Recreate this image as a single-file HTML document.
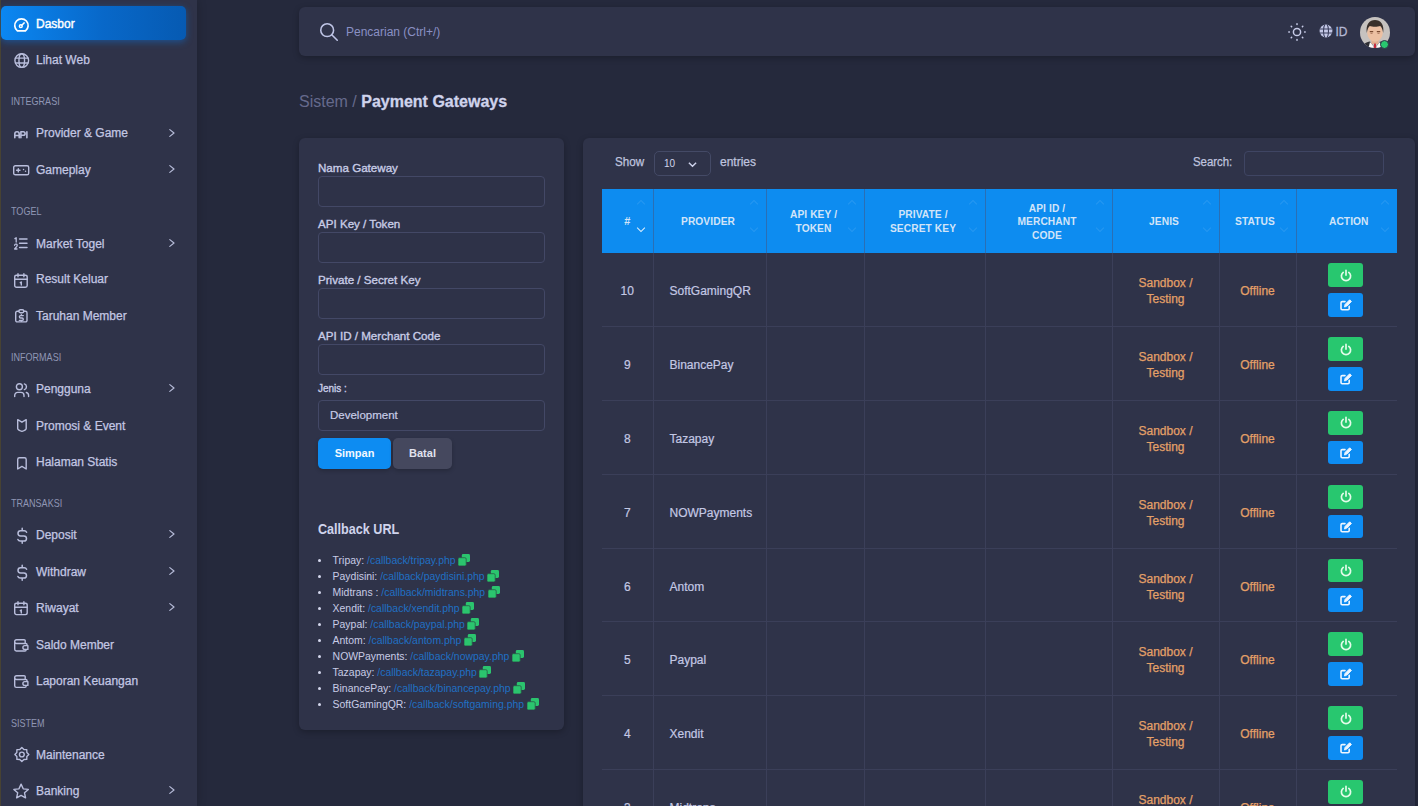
<!DOCTYPE html>
<html><head><meta charset="utf-8">
<style>
*{box-sizing:border-box;margin:0;padding:0}
html,body{width:1418px;height:806px;overflow:hidden}
body{background:#25293c;font-family:"Liberation Sans",sans-serif;color:#b6bee3;position:relative}
.edge{position:absolute;left:0;top:0;width:1px;height:806px;background:#4a4536}
#sb{position:absolute;left:1px;top:0;width:196px;height:806px;background:#2f3349;box-shadow:2px 0 8px rgba(0,0,0,.14);z-index:2}
.it{position:absolute;left:0;height:34px;width:185px}
.it.act{background:linear-gradient(90deg,#0b87f2 0%,#0868c9 55%,#065ab2 100%);border-radius:5px;box-shadow:0 2px 7px rgba(10,120,230,.45)}
.tx{position:absolute;left:35px;height:34px;line-height:34px;font-size:12px;color:#c3c7e3;white-space:nowrap;-webkit-text-stroke:.25px #c3c7e3}
.tx.act{color:#fff;-webkit-text-stroke:.4px #fff}
.ic.act{stroke:#fff}
.ic{position:absolute;overflow:visible;fill:none;stroke:#b9bedc;stroke-width:1.4;stroke-linecap:round;stroke-linejoin:round}
.chev{position:absolute;left:168px;width:6px;height:8px;overflow:visible;fill:none;stroke:#b6bbd8;stroke-width:1.2;stroke-linecap:round;stroke-linejoin:round}
.hd{position:absolute;left:9.8px;font-size:10.5px;line-height:12px;color:#9096b4;letter-spacing:0;transform:scaleX(.86);transform-origin:0 0}
#top{position:absolute;left:299px;top:6.5px;width:1116px;height:49px;background:#2f3349;border-radius:6px;box-shadow:0 2px 6px rgba(0,0,0,.25)}
.card{position:absolute;background:#2f3349;border-radius:6px;box-shadow:0 2px 6px rgba(0,0,0,.25)}
.lbl{position:absolute;left:19px;font-size:11.6px;color:#c8cce6;-webkit-text-stroke:.35px #c8cce6}
.cb{list-style:none;font-size:10.45px;color:#c8cce6}
.cb li{position:relative;height:16px;line-height:16px;padding-left:14.6px;white-space:nowrap}
.cb li:before{content:"";position:absolute;left:-0.3px;top:6.8px;width:3.2px;height:3.2px;border-radius:50%;background:#d5d8ee}
.cb a{color:#2070c4}
.cp{display:inline-block;width:12px;height:12px;margin-left:2.5px;vertical-align:-2px}

#tbl{position:absolute;left:19px;top:51px;border-collapse:collapse;table-layout:fixed;width:795px}
#tbl th{height:64px;background:#0d8cf0;color:#d2e4f8;font-size:10.2px;font-weight:bold;letter-spacing:.1px;line-height:13.6px;text-align:center;position:relative;padding:2px 9px 0 6px;border-left:1px solid #2a6fb5}
#tbl th:first-child{border-left:none}
#tbl th:before{content:"";position:absolute;right:9px;top:12px;width:5px;height:5px;border-left:1.3px solid rgba(255,255,255,.1);border-top:1.3px solid rgba(255,255,255,.1);transform:rotate(45deg)}
#tbl th:after{content:"";position:absolute;right:9px;top:36px;width:5px;height:5px;border-right:1.3px solid rgba(255,255,255,.1);border-bottom:1.3px solid rgba(255,255,255,.1);transform:rotate(45deg)}
#tbl th.srt{padding:2px 0 0 0;font-size:11px}
#tbl th.srt:after{border-color:rgba(255,255,255,.85);border-width:1.6px}
#tbl td{height:73.8px;border-left:1px solid #3b3f59;border-bottom:1px solid #3b3f59;font-size:12px;color:#c4c8e4;text-align:center;padding:3px 0 0 0;-webkit-text-stroke:.2px #c4c8e4}
#tbl td:first-child{border-left:none}
#tbl td.p{text-align:left;padding-left:16px}
#tbl td.a{padding-top:0.5px}
#tbl td.o{color:#e4a068;line-height:16px;-webkit-text-stroke:.25px #e4a068}
.bt{display:block;margin:0 auto;width:35px;height:23.7px;border-radius:3px;position:relative;left:-0.8px}
.bt svg{position:absolute;left:11px;top:5px;width:14px;height:14px;fill:none;stroke:#fff;stroke-width:2.6;stroke-linecap:round;stroke-linejoin:round}
.inp{position:absolute;left:19px;width:227px;height:31px;border:1px solid #434866;border-radius:4px;background:#2e3248}
</style></head><body>
<div class="edge"></div>
<div id="sb">
<div class="it act" style="top:6px"></div>
<div class="tx act" style="top:6.7px">Dasbor</div>
<svg class="ic act" style="left:13.1px;top:17.6px;width:14.9px;height:13.7px" viewBox="0 0 14.9 13.7"><path d="M3.4,12.85 A6.7,6.7 0 1 1 11.5,12.85 Z" stroke-width="1.7"/><circle cx="6.8" cy="8.2" r="1.4" stroke-width="1.5"/><path d="M7.8,7.2 L10.2,4.9" stroke-width="1.5"/></svg>
<div class="tx" style="top:42.9px">Lihat Web</div>
<svg class="ic" style="left:12.7px;top:52.7px;width:15.5px;height:15.1px" viewBox="0 0 15.5 15.1"><circle cx="7.75" cy="7.549999999999997" r="6.849999999999997"/><path d="M1.500000000000003,5.149999999999997 H13.999999999999998 M1.500000000000003,9.949999999999998 H13.999999999999998"/><ellipse cx="7.75" cy="7.549999999999997" rx="2.8" ry="6.849999999999997"/></svg>
<div class="hd" style="top:95.0px">INTEGRASI</div>
<div class="tx" style="top:116.3px">Provider &amp; Game</div>
<svg class="ic" style="left:13.3px;top:131.2px;width:13.8px;height:6.7px" viewBox="0 0 13.8 6.7"><path d="M0.8,6.8 V3 a2.2,2.2 0 0 1 4.4,0 V6.8 M0.8,4.5 H5.2 M6.9,6.8 V0.7 H9.3 a1.8,1.8 0 0 1 0,3.6 H6.9 M12.9,0.7 V6.8" stroke-width="1.6"/></svg>
<svg class="chev" style="top:128.5px" viewBox="0 0 6 8"><path d="M0.8,0.6 L5,4 L0.8,7.4"/></svg>
<div class="tx" style="top:152.6px">Gameplay</div>
<svg class="ic" style="left:12.2px;top:165.0px;width:16.4px;height:10.5px" viewBox="0 0 16.4 10.5"><rect x="0.7" y="0.7" width="15.000000000000002" height="9.1" rx="1.6"/><path d="M3.6,5.25 H7 M5.3,3.6 V6.9 M10.5,4.5 h.1 M12.5,6.3 h.1"/></svg>
<svg class="chev" style="top:164.8px" viewBox="0 0 6 8"><path d="M0.8,0.6 L5,4 L0.8,7.4"/></svg>
<div class="hd" style="top:205.1px">TOGEL</div>
<div class="tx" style="top:226.5px">Market Togel</div>
<svg class="ic" style="left:13.2px;top:237.4px;width:13.7px;height:12.5px" viewBox="0 0 13.7 12.5"><path d="M5.6,2 H13 M5.6,6.2 H13 M5.6,10.4 H13" stroke-width="1.5"/><path d="M0.9,1.6 L2.2,0.8 V5 M0.6,8.3 a1.3,1.3 0 1 1 2.2,1 L0.6,12 H3" stroke-width="1.3"/></svg>
<svg class="chev" style="top:238.7px" viewBox="0 0 6 8"><path d="M0.8,0.6 L5,4 L0.8,7.4"/></svg>
<div class="tx" style="top:262.2px">Result Keluar</div>
<svg class="ic" style="left:13.2px;top:272.8px;width:13.9px;height:14.9px" viewBox="0 0 13.9 14.9"><rect x="0.7" y="2.3" width="12.500000000000002" height="11.899999999999977" rx="1.8"/><path d="M4,0.7 V3.8 M9.900000000000002,0.7 V3.8 M0.7,6.2 H13.200000000000003 M6.3,9.7 L7.3,9 V12"/></svg>
<div class="tx" style="top:299.2px">Taruhan Member</div>
<svg class="ic" style="left:13.8px;top:309.4px;width:12.7px;height:13.6px" viewBox="0 0 12.7 13.6"><path d="M3.6,2.2 H2.2 a1.5,1.5 0 0 0 -1.5,1.5 V11.400000000000023 a1.5,1.5 0 0 0 1.5,1.5 H10.5 a1.5,1.5 0 0 0 1.5,-1.5 V3.7 a1.5,1.5 0 0 0 -1.5,-1.5 H9.1"/><rect x="3.9" y="0.7" width="4.9" height="3" rx="1.4"/><path d="M8.3,6.6 H5.6 a1.2,1.2 0 0 0 0,2.4 H7.1 a1.2,1.2 0 0 1 0,2.4 H4.4 M6.35,5.6 V6.6 M6.35,11.4 V12.3"/></svg>
<div class="hd" style="top:350.8px">INFORMASI</div>
<div class="tx" style="top:372.2px">Pengguna</div>
<svg class="ic" style="left:12.9px;top:383.0px;width:15.3px;height:14.3px" viewBox="0 0 15.3 14.3"><circle cx="5.4" cy="3.7" r="3"/><path d="M0.7,13.6 V12.4 a3,3 0 0 1 3,-3 H7 a3,3 0 0 1 3,3 V13.6 M10.4,0.9 a3,3 0 0 1 0,5.7 M14.6,13.6 V12.4 a3,3 0 0 0 -2.3,-2.9"/></svg>
<svg class="chev" style="top:384.4px" viewBox="0 0 6 8"><path d="M0.8,0.6 L5,4 L0.8,7.4"/></svg>
<div class="tx" style="top:408.9px">Promosi &amp; Event</div>
<svg class="ic" style="left:15.5px;top:419.0px;width:9.9px;height:13.0px" viewBox="0 0 9.9 13.0"><path d="M0.7,0.7 L4.95,3.2 L9.2,0.7 V9.4 Q9.2,11 4.95,12.3 Q0.7,11 0.7,9.4 Z"/></svg>
<div class="tx" style="top:445.2px">Halaman Statis</div>
<svg class="ic" style="left:15.5px;top:456.7px;width:9.9px;height:12.7px" viewBox="0 0 9.9 12.7"><path d="M2.4,0.7 H7.499999999999998 a1.7,1.7 0 0 1 1.7,1.7 V11.99999999999999 L4.95,9.399999999999988 L0.7,11.99999999999999 V2.4 a1.7,1.7 0 0 1 1.7,-1.7 Z"/></svg>
<div class="hd" style="top:496.7px">TRANSAKSI</div>
<div class="tx" style="top:518.2px">Deposit</div>
<svg class="ic" style="left:15.5px;top:528.3px;width:10.4px;height:15.1px" viewBox="0 0 10.4 15.1"><path d="M9.6,4.2 A2.6,2.6 0 0 0 7.3,2.7 H3.6 a2.6,2.6 0 0 0 0,5.2 H6.9 a2.6,2.6 0 0 1 0,5.2 H3.2 A2.6,2.6 0 0 1 0.9,11.5 M5.2,0.2 V2.7 M5.2,13.1 V15.3" stroke-width="1.5"/></svg>
<svg class="chev" style="top:530.4px" viewBox="0 0 6 8"><path d="M0.8,0.6 L5,4 L0.8,7.4"/></svg>
<div class="tx" style="top:554.7px">Withdraw</div>
<svg class="ic" style="left:15.5px;top:565.0px;width:10.4px;height:15.4px" viewBox="0 0 10.4 15.4"><path d="M9.6,4.2 A2.6,2.6 0 0 0 7.3,2.7 H3.6 a2.6,2.6 0 0 0 0,5.2 H6.9 a2.6,2.6 0 0 1 0,5.2 H3.2 A2.6,2.6 0 0 1 0.9,11.5 M5.2,0.2 V2.7 M5.2,13.1 V15.3" stroke-width="1.5"/></svg>
<svg class="chev" style="top:566.9px" viewBox="0 0 6 8"><path d="M0.8,0.6 L5,4 L0.8,7.4"/></svg>
<div class="tx" style="top:591.1px">Riwayat</div>
<svg class="ic" style="left:13.2px;top:601.2px;width:13.9px;height:14.3px" viewBox="0 0 13.9 14.3"><rect x="0.7" y="2.3" width="12.500000000000002" height="11.299999999999955" rx="1.8"/><path d="M4,0.7 V3.8 M9.900000000000002,0.7 V3.8 M0.7,6.2 H13.200000000000003 M6.3,9.7 L7.3,9 V12"/></svg>
<svg class="chev" style="top:603.3px" viewBox="0 0 6 8"><path d="M0.8,0.6 L5,4 L0.8,7.4"/></svg>
<div class="tx" style="top:627.9px">Saldo Member</div>
<svg class="ic" style="left:13.3px;top:638.5px;width:14.6px;height:12.7px" viewBox="0 0 14.6 12.7"><path d="M11.2,3.4 V1.8 a1.1,1.1 0 0 0 -1.1,-1.1 H2.6 a1.9,1.9 0 0 0 -1.9,1.9 V10.300000000000045 a1.7,1.7 0 0 0 1.7,1.7 H11 a1.1,1.1 0 0 0 1.1,-1.1 V10.6 M0.7,2.6 a1.9,1.9 0 0 0 1.9,1.9 H11.9 a1.1,1.1 0 0 1 1.1,1.1 V6.4"/><path d="M13.899999999999999,6.6 V10.4 H10.8 a1.9,1.9 0 0 1 0,-3.8 Z"/></svg>
<div class="tx" style="top:664.4px">Laporan Keuangan</div>
<svg class="ic" style="left:13.3px;top:675.0px;width:14.6px;height:13.1px" viewBox="0 0 14.6 13.1"><path d="M11.2,3.4 V1.8 a1.1,1.1 0 0 0 -1.1,-1.1 H2.6 a1.9,1.9 0 0 0 -1.9,1.9 V10.700000000000022 a1.7,1.7 0 0 0 1.7,1.7 H11 a1.1,1.1 0 0 0 1.1,-1.1 V10.6 M0.7,2.6 a1.9,1.9 0 0 0 1.9,1.9 H11.9 a1.1,1.1 0 0 1 1.1,1.1 V6.4"/><path d="M13.899999999999999,6.6 V10.4 H10.8 a1.9,1.9 0 0 1 0,-3.8 Z"/></svg>
<div class="hd" style="top:716.8px">SISTEM</div>
<div class="tx" style="top:737.9px">Maintenance</div>
<svg class="ic" style="left:12.9px;top:747.0px;width:15.7px;height:15.0px" viewBox="0 0 15.7 15.0"><path d="M7.85,0.50 L9.92,2.51 L12.80,2.55 L12.84,5.43 L14.85,7.50 L12.84,9.57 L12.80,12.45 L9.92,12.49 L7.85,14.50 L5.78,12.49 L2.90,12.45 L2.86,9.57 L0.85,7.50 L2.86,5.43 L2.90,2.55 L5.78,2.51 Z" stroke-width="1.35"/><circle cx="7.8500000000000005" cy="7.5" r="2.4"/></svg>
<div class="tx" style="top:773.9px">Banking</div>
<svg class="ic" style="left:12.4px;top:782.8px;width:16.2px;height:16.2px" viewBox="0 0 16.2 16.2"><path d="M8.10,1.15 L10.22,5.84 L15.33,6.40 L11.52,9.86 L12.57,14.90 L8.10,12.35 L3.63,14.90 L4.68,9.86 L0.87,6.40 L5.98,5.84 Z"/></svg>
<svg class="chev" style="top:786.1px" viewBox="0 0 6 8"><path d="M0.8,0.6 L5,4 L0.8,7.4"/></svg>
</div>

<div id="top">
  <svg style="position:absolute;left:18.5px;top:14.5px;width:22px;height:22px;fill:none;stroke:#bfc5e6;stroke-width:1.7;stroke-linecap:round" viewBox="0 0 24 24"><circle cx="10" cy="10" r="7"/><path d="M21 21l-6-6"/></svg>
  <div style="position:absolute;left:47px;top:18px;font-size:12px;color:#8a90c4">Pencarian (Ctrl+/)</div>
  <svg style="position:absolute;left:988.5px;top:16px;width:18px;height:18px;fill:none;stroke:#c8cce8;stroke-width:1.5;stroke-linecap:round" viewBox="0 0 18 18"><circle cx="9" cy="9" r="3.6"/><path d="M.8 9h.6M16.6 9h.6M9 .8v.6M9 16.6v.6M3.2 3.2l.4.4M14.4 14.4l.4.4M3.2 14.8l.4-.4M14.4 3.6l.4-.4"/></svg>
  <svg style="position:absolute;left:1020px;top:17px;width:14px;height:14px" viewBox="0 0 24 24"><circle cx="12" cy="12" r="11" fill="#c4c8e6"/><path d="M1 8.5h22M1 15.5h22M10 1c-3 4-3 18 0 22M14 1c3 4 3 18 0 22" stroke="#3a3e5c" stroke-width="1.8" fill="none"/></svg>
  <div style="position:absolute;left:1036.5px;top:18px;font-size:12px;color:#b4b8d4;-webkit-text-stroke:.3px #b4b8d4">ID</div>
  <div style="position:absolute;left:1061px;top:10px;width:30px;height:31px;border-radius:50%;background:#c6c2bf;overflow:hidden">
    <svg viewBox="0 0 30 31" width="30" height="31"><path d="M2 31c1-4 4-6 8-6.5L15 31z M28 31c-1-4-4-6-8-6.5L15 31z" fill="#2e2e33"/><rect x="11.5" y="21" width="7" height="6" fill="#e2ae90"/><path d="M10 25l5 6 5-6 1.5 6h-13z" fill="#fafafa"/><path d="M14.2 26.5h1.6l.6 4.5h-2.8z" fill="#c42a3c"/><ellipse cx="15" cy="15.5" rx="7.8" ry="9.3" fill="#ecc0a2"/><path d="M6.8 16C5.6 7 9.5 3 15 3s9.4 4 8.2 13c-.6-3.6-1.6-6-3-7-2.6 1-8 1-10.4 0-1.4 1-2.4 3.4-3 7z" fill="#3a302a"/><path d="M9.8 14.6h3.4M16.8 14.6h3.4" stroke="#7a4a30" stroke-width="1.1"/><path d="M10.5 16.4h2M17.5 16.4h2" stroke="#a06a50" stroke-width=".8"/></svg>
  </div>
  <div style="position:absolute;left:1081px;top:33px;width:9px;height:9px;border-radius:50%;background:#28c76f;border:1.5px solid #2f3349"></div>
</div>
<div style="position:absolute;left:299px;top:92.5px;font-size:16px;color:#656a8c">Sistem / <b style="color:#cfd3ec;-webkit-text-stroke:.3px #cfd3ec">Payment Gateways</b></div>

<div class="card" style="left:299px;top:138px;width:265px;height:592px">
  <div class="lbl" style="top:23px">Nama Gateway</div>
  <div class="inp" style="top:38px"></div>
  <div class="lbl" style="top:79px">API Key / Token</div>
  <div class="inp" style="top:94px"></div>
  <div class="lbl" style="top:135px">Private / Secret Key</div>
  <div class="inp" style="top:150px"></div>
  <div class="lbl" style="top:191px">API ID / Merchant Code</div>
  <div class="inp" style="top:206px"></div>
  <div class="lbl" style="top:245px;font-size:10px">Jenis :</div>
  <div class="inp" style="top:262px"><span style="position:absolute;left:11px;top:8px;font-size:11.5px;color:#c8cce6;-webkit-text-stroke:.2px #c8cce6">Development</span></div>
  <div style="position:absolute;left:19px;top:300px;width:73px;height:31px;border-radius:5px;background:#0d8cf2;color:#f4f8ff;font-size:11px;font-weight:bold;text-align:center;line-height:31px;box-shadow:0 2px 4px rgba(0,0,0,.2)">Simpan</div>
  <div style="position:absolute;left:94px;top:300px;width:59px;height:31px;border-radius:5px;background:#45485e;color:#e0e2ee;font-size:11px;font-weight:bold;text-align:center;line-height:31px;box-shadow:0 2px 4px rgba(0,0,0,.2)">Batal</div>
  <div style="position:absolute;left:19px;top:382px;font-size:15px;font-weight:bold;color:#cfd3ec;transform:scaleX(.84);transform-origin:0 0">Callback URL</div>
  <ul class="cb" style="position:absolute;left:19px;top:414.5px">
    <li>Tripay: <a>/callback/tripay.php</a><svg class="cp" viewBox="0 0 12 12"><rect x="3.8" y="0" width="8.2" height="8" rx="1.4" fill="#2bc46e"/><rect x="0" y="3.7" width="8.2" height="8.2" rx="1.4" fill="#2bc46e" stroke="#2a5a48" stroke-width=".8"/></svg></li>
    <li>Paydisini: <a>/callback/paydisini.php</a><svg class="cp" viewBox="0 0 12 12"><rect x="3.8" y="0" width="8.2" height="8" rx="1.4" fill="#2bc46e"/><rect x="0" y="3.7" width="8.2" height="8.2" rx="1.4" fill="#2bc46e" stroke="#2a5a48" stroke-width=".8"/></svg></li>
    <li>Midtrans : <a>/callback/midtrans.php</a><svg class="cp" viewBox="0 0 12 12"><rect x="3.8" y="0" width="8.2" height="8" rx="1.4" fill="#2bc46e"/><rect x="0" y="3.7" width="8.2" height="8.2" rx="1.4" fill="#2bc46e" stroke="#2a5a48" stroke-width=".8"/></svg></li>
    <li>Xendit: <a>/callback/xendit.php</a><svg class="cp" viewBox="0 0 12 12"><rect x="3.8" y="0" width="8.2" height="8" rx="1.4" fill="#2bc46e"/><rect x="0" y="3.7" width="8.2" height="8.2" rx="1.4" fill="#2bc46e" stroke="#2a5a48" stroke-width=".8"/></svg></li>
    <li>Paypal: <a>/callback/paypal.php</a><svg class="cp" viewBox="0 0 12 12"><rect x="3.8" y="0" width="8.2" height="8" rx="1.4" fill="#2bc46e"/><rect x="0" y="3.7" width="8.2" height="8.2" rx="1.4" fill="#2bc46e" stroke="#2a5a48" stroke-width=".8"/></svg></li>
    <li>Antom: <a>/callback/antom.php</a><svg class="cp" viewBox="0 0 12 12"><rect x="3.8" y="0" width="8.2" height="8" rx="1.4" fill="#2bc46e"/><rect x="0" y="3.7" width="8.2" height="8.2" rx="1.4" fill="#2bc46e" stroke="#2a5a48" stroke-width=".8"/></svg></li>
    <li>NOWPayments: <a>/callback/nowpay.php</a><svg class="cp" viewBox="0 0 12 12"><rect x="3.8" y="0" width="8.2" height="8" rx="1.4" fill="#2bc46e"/><rect x="0" y="3.7" width="8.2" height="8.2" rx="1.4" fill="#2bc46e" stroke="#2a5a48" stroke-width=".8"/></svg></li>
    <li>Tazapay: <a>/callback/tazapay.php</a><svg class="cp" viewBox="0 0 12 12"><rect x="3.8" y="0" width="8.2" height="8" rx="1.4" fill="#2bc46e"/><rect x="0" y="3.7" width="8.2" height="8.2" rx="1.4" fill="#2bc46e" stroke="#2a5a48" stroke-width=".8"/></svg></li>
    <li>BinancePay: <a>/callback/binancepay.php</a><svg class="cp" viewBox="0 0 12 12"><rect x="3.8" y="0" width="8.2" height="8" rx="1.4" fill="#2bc46e"/><rect x="0" y="3.7" width="8.2" height="8.2" rx="1.4" fill="#2bc46e" stroke="#2a5a48" stroke-width=".8"/></svg></li>
    <li>SoftGamingQR: <a>/callback/softgaming.php</a><svg class="cp" viewBox="0 0 12 12"><rect x="3.8" y="0" width="8.2" height="8" rx="1.4" fill="#2bc46e"/><rect x="0" y="3.7" width="8.2" height="8.2" rx="1.4" fill="#2bc46e" stroke="#2a5a48" stroke-width=".8"/></svg></li>
  </ul>
</div>

<div class="card" style="left:583px;top:138px;width:832px;height:700px">
  <div style="position:absolute;left:32px;top:16.5px;font-size:12px;color:#bfc3df;-webkit-text-stroke:.25px #bfc3df;transform:scaleX(.97);transform-origin:0 0">Show</div>
  <div style="position:absolute;left:71px;top:13px;width:57px;height:25px;border:1px solid #444a66;border-radius:5px;font-size:10px;color:#cfd3ec"><span style="position:absolute;left:9px;top:6px">10</span><svg style="position:absolute;left:33px;top:8px;width:9px;height:9px;fill:none;stroke:#cfd3ec;stroke-width:1.6" viewBox="0 0 10 10"><path d="M1 3l4 4 4-4"/></svg></div>
  <div style="position:absolute;left:137px;top:16.5px;font-size:12px;color:#bfc3df;-webkit-text-stroke:.25px #bfc3df">entries</div>
  <div style="position:absolute;left:610px;top:16.5px;font-size:12px;color:#bfc3df;-webkit-text-stroke:.25px #bfc3df;transform:scaleX(.95);transform-origin:0 0">Search:</div>
  <div style="position:absolute;left:661px;top:13px;width:140px;height:25px;border:1px solid #3f4563;border-radius:4px"></div>
<table id="tbl"><colgroup><col style="width:51px"><col style="width:113px"><col style="width:98px"><col style="width:121px"><col style="width:127px"><col style="width:107px"><col style="width:77px"><col style="width:101px"></colgroup>
<tr><th class="srt">#</th><th>PROVIDER</th><th>API KEY /<br>TOKEN</th><th>PRIVATE /<br>SECRET KEY</th><th>API ID /<br>MERCHANT<br>CODE</th><th>JENIS</th><th style="padding:2px 9px 0 4px">STATUS</th><th style="padding:2px 6px 0 10px">ACTION</th></tr>
<tr><td>10</td><td class="p">SoftGamingQR</td><td></td><td></td><td></td><td class="o">Sandbox /<br>Testing</td><td class="o">Offline</td><td class="a"><span class="bt" style="background:#28c76f"><svg viewBox="0 0 14 14" style="left:10.5px;top:4.3px;width:14px;height:14px;stroke:#e2fbe9;stroke-width:1.7"><path d="M4.2 4.4a4.6 4.6 0 1 0 5.6 0M7 2.3v4.8"/></svg></span><span class="bt" style="background:#0d8cf2;margin-top:6px"><svg viewBox="0 0 12 12" style="left:11.5px;top:6px;width:12px;height:12px;stroke:#eef6ff;stroke-width:1.6"><path d="M5 2.6H2.2a1.2 1.2 0 0 0-1.2 1.2v5.8a1.2 1.2 0 0 0 1.2 1.2h5.8a1.2 1.2 0 0 0 1.2-1.2V7.2"/><path d="M4.6 7.6l.5-2.2 4.6-4.6 1.7 1.7-4.6 4.6z" fill="#eef6ff" stroke-width="1"/></svg></span></td></tr>
<tr><td>9</td><td class="p">BinancePay</td><td></td><td></td><td></td><td class="o">Sandbox /<br>Testing</td><td class="o">Offline</td><td class="a"><span class="bt" style="background:#28c76f"><svg viewBox="0 0 14 14" style="left:10.5px;top:4.3px;width:14px;height:14px;stroke:#e2fbe9;stroke-width:1.7"><path d="M4.2 4.4a4.6 4.6 0 1 0 5.6 0M7 2.3v4.8"/></svg></span><span class="bt" style="background:#0d8cf2;margin-top:6px"><svg viewBox="0 0 12 12" style="left:11.5px;top:6px;width:12px;height:12px;stroke:#eef6ff;stroke-width:1.6"><path d="M5 2.6H2.2a1.2 1.2 0 0 0-1.2 1.2v5.8a1.2 1.2 0 0 0 1.2 1.2h5.8a1.2 1.2 0 0 0 1.2-1.2V7.2"/><path d="M4.6 7.6l.5-2.2 4.6-4.6 1.7 1.7-4.6 4.6z" fill="#eef6ff" stroke-width="1"/></svg></span></td></tr>
<tr><td>8</td><td class="p">Tazapay</td><td></td><td></td><td></td><td class="o">Sandbox /<br>Testing</td><td class="o">Offline</td><td class="a"><span class="bt" style="background:#28c76f"><svg viewBox="0 0 14 14" style="left:10.5px;top:4.3px;width:14px;height:14px;stroke:#e2fbe9;stroke-width:1.7"><path d="M4.2 4.4a4.6 4.6 0 1 0 5.6 0M7 2.3v4.8"/></svg></span><span class="bt" style="background:#0d8cf2;margin-top:6px"><svg viewBox="0 0 12 12" style="left:11.5px;top:6px;width:12px;height:12px;stroke:#eef6ff;stroke-width:1.6"><path d="M5 2.6H2.2a1.2 1.2 0 0 0-1.2 1.2v5.8a1.2 1.2 0 0 0 1.2 1.2h5.8a1.2 1.2 0 0 0 1.2-1.2V7.2"/><path d="M4.6 7.6l.5-2.2 4.6-4.6 1.7 1.7-4.6 4.6z" fill="#eef6ff" stroke-width="1"/></svg></span></td></tr>
<tr><td>7</td><td class="p">NOWPayments</td><td></td><td></td><td></td><td class="o">Sandbox /<br>Testing</td><td class="o">Offline</td><td class="a"><span class="bt" style="background:#28c76f"><svg viewBox="0 0 14 14" style="left:10.5px;top:4.3px;width:14px;height:14px;stroke:#e2fbe9;stroke-width:1.7"><path d="M4.2 4.4a4.6 4.6 0 1 0 5.6 0M7 2.3v4.8"/></svg></span><span class="bt" style="background:#0d8cf2;margin-top:6px"><svg viewBox="0 0 12 12" style="left:11.5px;top:6px;width:12px;height:12px;stroke:#eef6ff;stroke-width:1.6"><path d="M5 2.6H2.2a1.2 1.2 0 0 0-1.2 1.2v5.8a1.2 1.2 0 0 0 1.2 1.2h5.8a1.2 1.2 0 0 0 1.2-1.2V7.2"/><path d="M4.6 7.6l.5-2.2 4.6-4.6 1.7 1.7-4.6 4.6z" fill="#eef6ff" stroke-width="1"/></svg></span></td></tr>
<tr><td>6</td><td class="p">Antom</td><td></td><td></td><td></td><td class="o">Sandbox /<br>Testing</td><td class="o">Offline</td><td class="a"><span class="bt" style="background:#28c76f"><svg viewBox="0 0 14 14" style="left:10.5px;top:4.3px;width:14px;height:14px;stroke:#e2fbe9;stroke-width:1.7"><path d="M4.2 4.4a4.6 4.6 0 1 0 5.6 0M7 2.3v4.8"/></svg></span><span class="bt" style="background:#0d8cf2;margin-top:6px"><svg viewBox="0 0 12 12" style="left:11.5px;top:6px;width:12px;height:12px;stroke:#eef6ff;stroke-width:1.6"><path d="M5 2.6H2.2a1.2 1.2 0 0 0-1.2 1.2v5.8a1.2 1.2 0 0 0 1.2 1.2h5.8a1.2 1.2 0 0 0 1.2-1.2V7.2"/><path d="M4.6 7.6l.5-2.2 4.6-4.6 1.7 1.7-4.6 4.6z" fill="#eef6ff" stroke-width="1"/></svg></span></td></tr>
<tr><td>5</td><td class="p">Paypal</td><td></td><td></td><td></td><td class="o">Sandbox /<br>Testing</td><td class="o">Offline</td><td class="a"><span class="bt" style="background:#28c76f"><svg viewBox="0 0 14 14" style="left:10.5px;top:4.3px;width:14px;height:14px;stroke:#e2fbe9;stroke-width:1.7"><path d="M4.2 4.4a4.6 4.6 0 1 0 5.6 0M7 2.3v4.8"/></svg></span><span class="bt" style="background:#0d8cf2;margin-top:6px"><svg viewBox="0 0 12 12" style="left:11.5px;top:6px;width:12px;height:12px;stroke:#eef6ff;stroke-width:1.6"><path d="M5 2.6H2.2a1.2 1.2 0 0 0-1.2 1.2v5.8a1.2 1.2 0 0 0 1.2 1.2h5.8a1.2 1.2 0 0 0 1.2-1.2V7.2"/><path d="M4.6 7.6l.5-2.2 4.6-4.6 1.7 1.7-4.6 4.6z" fill="#eef6ff" stroke-width="1"/></svg></span></td></tr>
<tr><td>4</td><td class="p">Xendit</td><td></td><td></td><td></td><td class="o">Sandbox /<br>Testing</td><td class="o">Offline</td><td class="a"><span class="bt" style="background:#28c76f"><svg viewBox="0 0 14 14" style="left:10.5px;top:4.3px;width:14px;height:14px;stroke:#e2fbe9;stroke-width:1.7"><path d="M4.2 4.4a4.6 4.6 0 1 0 5.6 0M7 2.3v4.8"/></svg></span><span class="bt" style="background:#0d8cf2;margin-top:6px"><svg viewBox="0 0 12 12" style="left:11.5px;top:6px;width:12px;height:12px;stroke:#eef6ff;stroke-width:1.6"><path d="M5 2.6H2.2a1.2 1.2 0 0 0-1.2 1.2v5.8a1.2 1.2 0 0 0 1.2 1.2h5.8a1.2 1.2 0 0 0 1.2-1.2V7.2"/><path d="M4.6 7.6l.5-2.2 4.6-4.6 1.7 1.7-4.6 4.6z" fill="#eef6ff" stroke-width="1"/></svg></span></td></tr>
<tr><td>3</td><td class="p">Midtrans</td><td></td><td></td><td></td><td class="o">Sandbox /<br>Testing</td><td class="o">Offline</td><td class="a"><span class="bt" style="background:#28c76f"><svg viewBox="0 0 14 14" style="left:10.5px;top:4.3px;width:14px;height:14px;stroke:#e2fbe9;stroke-width:1.7"><path d="M4.2 4.4a4.6 4.6 0 1 0 5.6 0M7 2.3v4.8"/></svg></span><span class="bt" style="background:#0d8cf2;margin-top:6px"><svg viewBox="0 0 12 12" style="left:11.5px;top:6px;width:12px;height:12px;stroke:#eef6ff;stroke-width:1.6"><path d="M5 2.6H2.2a1.2 1.2 0 0 0-1.2 1.2v5.8a1.2 1.2 0 0 0 1.2 1.2h5.8a1.2 1.2 0 0 0 1.2-1.2V7.2"/><path d="M4.6 7.6l.5-2.2 4.6-4.6 1.7 1.7-4.6 4.6z" fill="#eef6ff" stroke-width="1"/></svg></span></td></tr>
</table>

</div>
</body></html>
